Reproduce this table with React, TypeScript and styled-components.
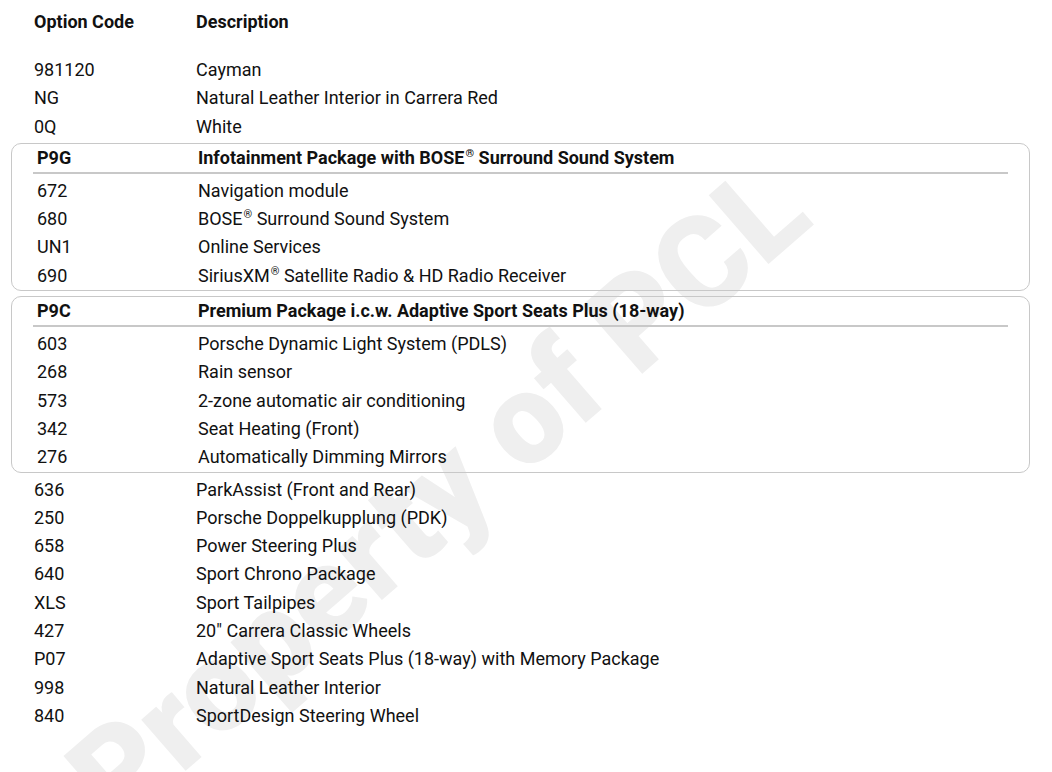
import styled, { createGlobalStyle } from "styled-components";
import { Fragment } from "react";

type Option = { code: string; text: string };
type Pack = { code: string; title: string; items: Option[] };

const before: Option[] = [
  { code: "981120", text: "Cayman" },
  { code: "NG", text: "Natural Leather Interior in Carrera Red" },
  { code: "0Q", text: "White" },
];

const packs: Pack[] = [
  {
    code: "P9G",
    title: "Infotainment Package with BOSE® Surround Sound System",
    items: [
      { code: "672", text: "Navigation module" },
      { code: "680", text: "BOSE® Surround Sound System" },
      { code: "UN1", text: "Online Services" },
      { code: "690", text: "SiriusXM® Satellite Radio & HD Radio Receiver" },
    ],
  },
  {
    code: "P9C",
    title: "Premium Package i.c.w. Adaptive Sport Seats Plus (18-way)",
    items: [
      { code: "603", text: "Porsche Dynamic Light System (PDLS)" },
      { code: "268", text: "Rain sensor" },
      { code: "573", text: "2-zone automatic air conditioning" },
      { code: "342", text: "Seat Heating (Front)" },
      { code: "276", text: "Automatically Dimming Mirrors" },
    ],
  },
];

const after: Option[] = [
  { code: "636", text: "ParkAssist (Front and Rear)" },
  { code: "250", text: "Porsche Doppelkupplung (PDK)" },
  { code: "658", text: "Power Steering Plus" },
  { code: "640", text: "Sport Chrono Package" },
  { code: "XLS", text: "Sport Tailpipes" },
  { code: "427", text: '20" Carrera Classic Wheels' },
  { code: "P07", text: "Adaptive Sport Seats Plus (18-way) with Memory Package" },
  { code: "998", text: "Natural Leather Interior" },
  { code: "840", text: "SportDesign Steering Wheel" },
];

// splits "BOSE®" so the mark can be raised
function withMarks(text: string) {
  const parts = text.split("®");
  return parts.map((p, i) => (
    <Fragment key={i}>
      {p}
      {i < parts.length - 1 && <Mark>®</Mark>}
    </Fragment>
  ));
}

export default function App() {
  return (
    <>
      <GlobalStyle />
      <Page>
        <Watermark aria-hidden>Property of PCL</Watermark>
        <Content>
          <HeadRow>
            <span>Option Code</span>
            <span>Description</span>
          </HeadRow>

          {before.map((o) => (
            <Row key={o.code}>
              <span>{o.code}</span>
              <span>{o.text}</span>
            </Row>
          ))}

          {packs.map((p) => (
            <PackBox key={p.code}>
              <PackHead>
                <span>{p.code}</span>
                <span>{withMarks(p.title)}</span>
              </PackHead>
              {p.items.map((o) => (
                <PackRow key={o.code}>
                  <span>{o.code}</span>
                  <span>{withMarks(o.text)}</span>
                </PackRow>
              ))}
            </PackBox>
          ))}

          <After>
            {after.map((o) => (
              <Row key={o.code}>
                <span>{o.code}</span>
                <span>{o.text}</span>
              </Row>
            ))}
          </After>
        </Content>
      </Page>
    </>
  );
}

const GlobalStyle = createGlobalStyle`
  html, body {
    margin: 0;
    background: #fff;
  }
  body {
    font-family: Roboto, "Liberation Sans", sans-serif;
    color: #111;
  }
`;

const Page = styled.div`
  position: relative;
  width: 1052px;
  height: 772px;
  overflow: hidden;
  box-sizing: border-box;
  padding: 8px 22px 0 11px;
`;

const Watermark = styled.div`
  position: absolute;
  left: 438px;
  top: 493px;
  transform: translate(-50%, -50%) rotate(-41deg);
  font-size: 128px;
  line-height: 1;
  font-weight: 900;
  color: #efefef;
  white-space: nowrap;
  pointer-events: none;
`;

const Content = styled.div`
  position: relative;
  font-size: 18px;
`;

const Row = styled.div`
  display: grid;
  grid-template-columns: 162px 1fr;
  height: 28.3px;
  line-height: 28.3px;
  padding-left: 23px;
`;

const HeadRow = styled(Row)`
  height: 28px;
  line-height: 28px;
  font-weight: 700;
  margin-bottom: 20px;
`;

const PackBox = styled.div`
  border: 1px solid #c8c8c8;
  border-radius: 10px;
  margin-top: 2px;

  & + & {
    margin-top: 5px;
  }
`;

const PackHead = styled.div`
  display: grid;
  grid-template-columns: 161px 1fr;
  height: 28px;
  line-height: 28px;
  margin: 0 21px 3px;
  padding-left: 4px;
  border-bottom: 2px solid #c8c8c8;
  font-weight: 700;
`;

const PackRow = styled.div`
  display: grid;
  grid-template-columns: 161px 1fr;
  height: 28.3px;
  line-height: 28.3px;
  padding-left: 25px;
`;

const After = styled.div`
  margin-top: 3px;
`;

const Mark = styled.sup`
  font-size: 11px;
  line-height: 0;
  vertical-align: 7px;
  margin-left: 1px;
`;
